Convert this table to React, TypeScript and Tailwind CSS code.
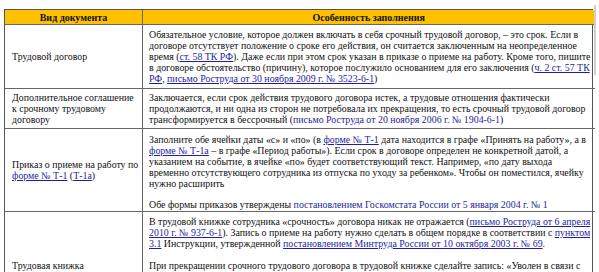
import React from "react";

const A = ({ children, u = true }: { children: React.ReactNode; u?: boolean }) => (
  <span className={u ? "text-[#1e1ea0] underline underline-offset-[1px]" : "text-[#1e1ea0]"}>{children}</span>
);

const Cell1 = ({ children }: { children: React.ReactNode }) => (
  <div className="flex items-center pl-[7px] pr-[2px] border-r border-[#666] whitespace-nowrap">
    <div>{children}</div>
  </div>
);

const Cell2 = ({ children, pad }: { children: React.ReactNode; pad: string }) => (
  <div className={`pl-[6px] pr-[4px] whitespace-nowrap ${pad}`}>{children}</div>
);

const Sep = () => <div className="col-span-2 h-px bg-[#666]" />;

export default function App() {
  return (
    <div className="w-[599px] h-[272px] overflow-hidden bg-white pt-[9px] pl-[4px] text-[9.9px] leading-[11px] text-[#111] font-['Liberation_Serif','Times_New_Roman',serif] flex items-start">
      <div className="w-[589px] shrink-0 border border-[#555] grid grid-cols-[138px_1fr]">
        <div className="h-[15px] bg-[#FFC000] font-bold text-[10px] flex items-center justify-center border-r border-[#666] border-b">
          Вид документа
        </div>
        <div className="h-[15px] bg-[#FFC000] font-bold text-[10px] flex items-center justify-center border-b border-[#666]">
          Особенность заполнения
        </div>

        <Cell1>Трудовой договор</Cell1>
        <Cell2 pad="pt-[4px] pb-[4px]">
          Обязательное условие, которое должен включать в себя срочный трудовой договор, – это срок. Если в
          <br />
          договоре отсутствует положение о сроке его действия, он считается заключенным на неопределенное
          <br />
          время (<A>ст. 58 ТК РФ</A>). Даже если при этом срок указан в приказе о приеме на работу. Кроме того, пишите
          <br />
          в договоре обстоятельство (причину), которое послужило основанием для его заключения (<A>ч. 2 ст. 57 ТК</A>
          <br />
          <A>РФ</A>, <A>письмо Роструда от 30 ноября 2009 г. № 3523-6-1</A>)
        </Cell2>

        <Sep />

        <Cell1>
          Дополнительное соглашение
          <br />к срочному трудовому
          <br />
          договору
        </Cell1>
        <Cell2 pad="pt-[3px] pb-[3px]">
          Заключается, если срок действия трудового договора истек, а трудовые отношения фактически
          <br />
          продолжаются, и ни одна из сторон не потребовала их прекращения, то есть срочный трудовой договор
          <br />
          трансформируется в бессрочный (<A u={false}>письмо Роструда от 20 ноября 2006 г. № 1904-6-1</A>)
        </Cell2>

        <Sep />

        <Cell1>
          Приказ о приеме на работу по
          <br />
          <A>форме № Т-1</A> (<A>Т-1а</A>)
        </Cell1>
        <Cell2 pad="pt-[5px] pb-[1px]">
          Заполните обе ячейки даты «с» и «по» (в <A>форме № Т-1</A> дата находится в графе «Принять на работу», а в
          <br />
          <A>форме № Т-1а</A> – в графе «Период работы»). Если срок в договоре определен не конкретной датой, а
          <br />
          указанием на событие, в ячейке «по» будет соответствующий текст. Например, «по дату выхода
          <br />
          временно отсутствующего сотрудника из отпуска по уходу за ребенком». Чтобы он поместился, ячейку
          <br />
          нужно расширить
          <div className="h-[10px]" />
          Обе формы приказов утверждены <A u={false}>постановлением Госкомстата России от 5 января 2004 г. № 1</A>
        </Cell2>

        <Sep />

        <Cell1>Трудовая книжка</Cell1>
        <Cell2 pad="pt-[4px] pb-[26px]">
          В трудовой книжке сотрудника «срочность» договора никак не отражается (<A>письмо Роструда от 6 апреля</A>
          <br />
          <A>2010 г. № 937-6-1</A>). Запись о приеме на работу нужно сделать в общем порядке в соответствии с <A>пунктом</A>
          <br />
          <A>3.1</A> Инструкции, утвержденной <A>постановлением Минтруда России от 10 октября 2003 г. № 69</A>.
          <div className="h-[11px]" />
          При прекращении срочного трудового договора в трудовой книжке сделайте запись: «Уволен в связи с
          <br />
          истечением срока трудового договора, пункт 2 части первой статьи 77 Трудового кодекса Российской
          <br />
          Федерации».
        </Cell2>
      </div>
      <div className="-mt-[4px] ml-[1px] w-[2px] h-[70px] bg-[#cfcfcf]" />
    </div>
  );
}
